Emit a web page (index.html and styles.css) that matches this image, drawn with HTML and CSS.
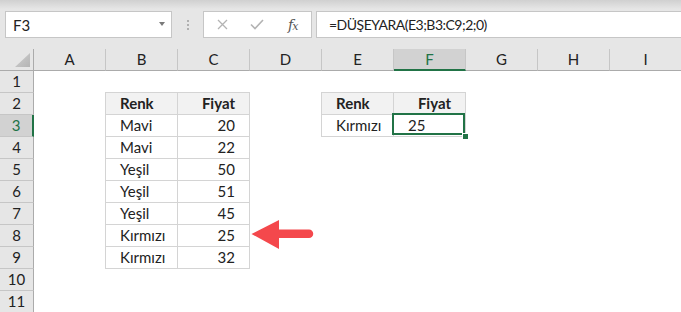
FILE: index.html
```html
<!DOCTYPE html>
<html lang="tr">
  <head>
    <meta charset="UTF-8" />
    <title>DÜŞEYARA</title>
    <link rel="stylesheet" href="styles.css">
  </head>
  <body>
    <div class="app">
      <div class="toolbar">
        <div class="namebox"><span>F3</span><span class="caret"></span></div>
        <div class="grip"></div>
        <div class="fx-buttons">
          <svg class="ico-x" width="11" height="11" viewBox="0 0 11 11">
            <path d="M1 1 L10 10 M10 1 L1 10" stroke="#b3b3b3" stroke-width="1.3" fill="none" />
          </svg>
          <svg class="ico-check" width="14" height="11" viewBox="0 0 14 11">
            <path d="M1 5.5 L5 9.5 L13 1" stroke="#b3b3b3" stroke-width="1.6" fill="none" />
          </svg>
          <span class="fx">f<small>x</small></span>
        </div>
        <div class="formula">=DÜŞEYARA(E3;B3:C9;2;0)</div>
      </div>

      <div class="sheet">
        <div class="row colhead">
          <div class="corner"><span></span></div>
          <div class="h">A</div>
          <div class="h">B</div>
          <div class="h">C</div>
          <div class="h">D</div>
          <div class="h">E</div>
          <div class="h active">F</div>
          <div class="h">G</div>
          <div class="h">H</div>
          <div class="h">I</div>
        </div>
        <div class="row"><div class="rh">1</div></div>
        <div class="row">
          <div class="rh">2</div>
          <div class="cell col-b th first top">Renk</div>
          <div class="cell col-c th num top">Fiyat</div>
          <div class="cell col-e th first top">Renk</div>
          <div class="cell col-f th num top">Fiyat</div>
        </div>
        <div class="row">
          <div class="rh active">3</div>
          <div class="cell col-b first">Mavi</div>
          <div class="cell col-c num">20</div>
          <div class="cell col-e first">Kırmızı</div>
          <div class="cell col-f sel">25</div>
        </div>
        <div class="row">
          <div class="rh">4</div>
          <div class="cell col-b first">Mavi</div>
          <div class="cell col-c num">22</div>
        </div>
        <div class="row">
          <div class="rh">5</div>
          <div class="cell col-b first">Yeşil</div>
          <div class="cell col-c num">50</div>
        </div>
        <div class="row">
          <div class="rh">6</div>
          <div class="cell col-b first">Yeşil</div>
          <div class="cell col-c num">51</div>
        </div>
        <div class="row">
          <div class="rh">7</div>
          <div class="cell col-b first">Yeşil</div>
          <div class="cell col-c num">45</div>
        </div>
        <div class="row">
          <div class="rh">8</div>
          <div class="cell col-b first">Kırmızı</div>
          <div class="cell col-c num">25</div>
        </div>
        <div class="row">
          <div class="rh">9</div>
          <div class="cell col-b first">Kırmızı</div>
          <div class="cell col-c num">32</div>
        </div>
        <div class="row"><div class="rh">10</div></div>
        <div class="row"><div class="rh">11</div></div>
      </div>

      <svg class="arrow" width="70" height="38" viewBox="0 0 70 38">
        <path d="M3.5 18 L31 4 L31 13.5 L61 13.5 A4.25 4.25 0 0 1 61 22 L31 22 L31 33 Z" fill="#f4484c" />
      </svg>
    </div>
  </body>
</html>
```

FILE: styles.css
```css
body {
  margin: 0;
  font-family: Lato, "Open Sans", sans-serif;
  color: #222;
  background: #fff;
}

.app {
  width: 681px;
  height: 312px;
  position: relative;
  overflow: hidden;
}

/* formula bar */
.toolbar {
  height: 48px;
  box-sizing: border-box;
  padding-top: 11px;
  display: flex;
  align-items: flex-start;
  background: linear-gradient(#d0d0d0, #e6e6e6 9px);
}

.namebox {
  margin-left: 5px;
  width: 167px;
  height: 27px;
  box-sizing: border-box;
  border: 1px solid #c6c6c6;
  background: #fff;
  display: flex;
  align-items: center;
  justify-content: space-between;
  padding: 0 6px 0 7px;
  font-size: 15px;
}

.caret {
  width: 0;
  height: 0;
  border-left: 3.5px solid transparent;
  border-right: 3.5px solid transparent;
  border-top: 4px solid #7a7a7a;
  margin-top: -2px;
}

.grip {
  margin: 9px 0 0 15px;
  width: 2px;
  height: 2px;
  background: #b0b0b0;
  box-shadow: 0 4px 0 #b0b0b0, 0 8px 0 #b0b0b0;
}

.fx-buttons {
  margin-left: 14px;
  width: 109px;
  height: 27px;
  box-sizing: border-box;
  border: 1px solid #c6c6c6;
  background: #fff;
  display: flex;
  align-items: center;
  padding-left: 13px;
}

.ico-check {
  margin-left: 22px;
}

.fx {
  margin-left: 24px;
  font-family: "DejaVu Serif", serif;
  font-style: italic;
  font-size: 14px;
  color: #555;
  letter-spacing: -1px;
}

.fx small {
  font-size: 11px;
}

.formula {
  margin-left: 4px;
  flex: 1;
  height: 27px;
  box-sizing: border-box;
  border: 1px solid #c6c6c6;
  border-right: none;
  background: #fff;
  padding-left: 12px;
  font-size: 14px;
  letter-spacing: -0.5px;
  line-height: 25px;
  white-space: nowrap;
}

/* grid */
.row {
  display: grid;
  grid-template-columns: 34px repeat(9, 72px);
  grid-template-rows: 22px;
  font-size: 15px;
  line-height: 21px;
}

.colhead {
  grid-template-rows: 22px;
  padding-top: 1px;
  background: #e6e6e6;
  line-height: 21px;
  border-bottom: 0;
}

.colhead > div {
  box-sizing: border-box;
  border-right: 1px solid #c6c6c6;
  border-bottom: 1px solid #ababab;
}

.colhead .h {
  text-align: center;
}

.colhead .active {
  background: #d2d2d2;
  color: #217346;
  border-bottom: 2px solid #217346;
}

.corner {
  display: flex;
  justify-content: flex-end;
  align-items: flex-end;
  padding: 0 3px 3px 0;
  border-right-color: #ababab !important;
}

.corner span {
  width: 15px;
  height: 14px;
  background: linear-gradient(135deg, #d0d0d0, #b4b4b4);
  clip-path: polygon(100% 0, 100% 100%, 0 100%);
}

.rh {
  grid-column: 1;
  box-sizing: border-box;
  background: #e6e6e6;
  text-align: center;
  border-right: 1px solid #ababab;
  border-bottom: 1px solid #c6c6c6;
}

.rh.active {
  background: #d2d2d2;
  color: #217346;
  border-right: 2px solid #217346;
}

.col-b { grid-column: 3; }
.col-c { grid-column: 4; }
.col-e { grid-column: 6; }
.col-f { grid-column: 7; }

.cell {
  box-sizing: border-box;
  border-right: 1px solid #d4d4d4;
  border-bottom: 1px solid #d4d4d4;
  padding: 0 14px;
  white-space: nowrap;
}

.cell.first {
  box-shadow: -1px 0 0 #d4d4d4;
}

.cell.top {
  box-shadow: 0 -1px 0 #d4d4d4;
}

.cell.first.top {
  box-shadow: 0 -1px 0 #d4d4d4, -1px 0 0 #d4d4d4, -1px -1px 0 #d4d4d4;
}

.th {
  background: #f2f2f2;
  font-weight: bold;
  text-align: right;
}

.th.first {
  text-align: left;
}

.num {
  text-align: right;
}

.sel {
  position: relative;
}

.sel::before {
  content: "";
  position: absolute;
  top: -2px;
  left: -2px;
  right: 0;
  bottom: 1px;
  border: 2px solid #217346;
}

.sel::after {
  content: "";
  position: absolute;
  left: 68px;
  top: 18px;
  width: 5px;
  height: 5px;
  background: #217346;
  border-top: 1px solid #fff;
  border-left: 1px solid #fff;
}

.arrow {
  position: absolute;
  left: 248px;
  top: 216px;
}
```
